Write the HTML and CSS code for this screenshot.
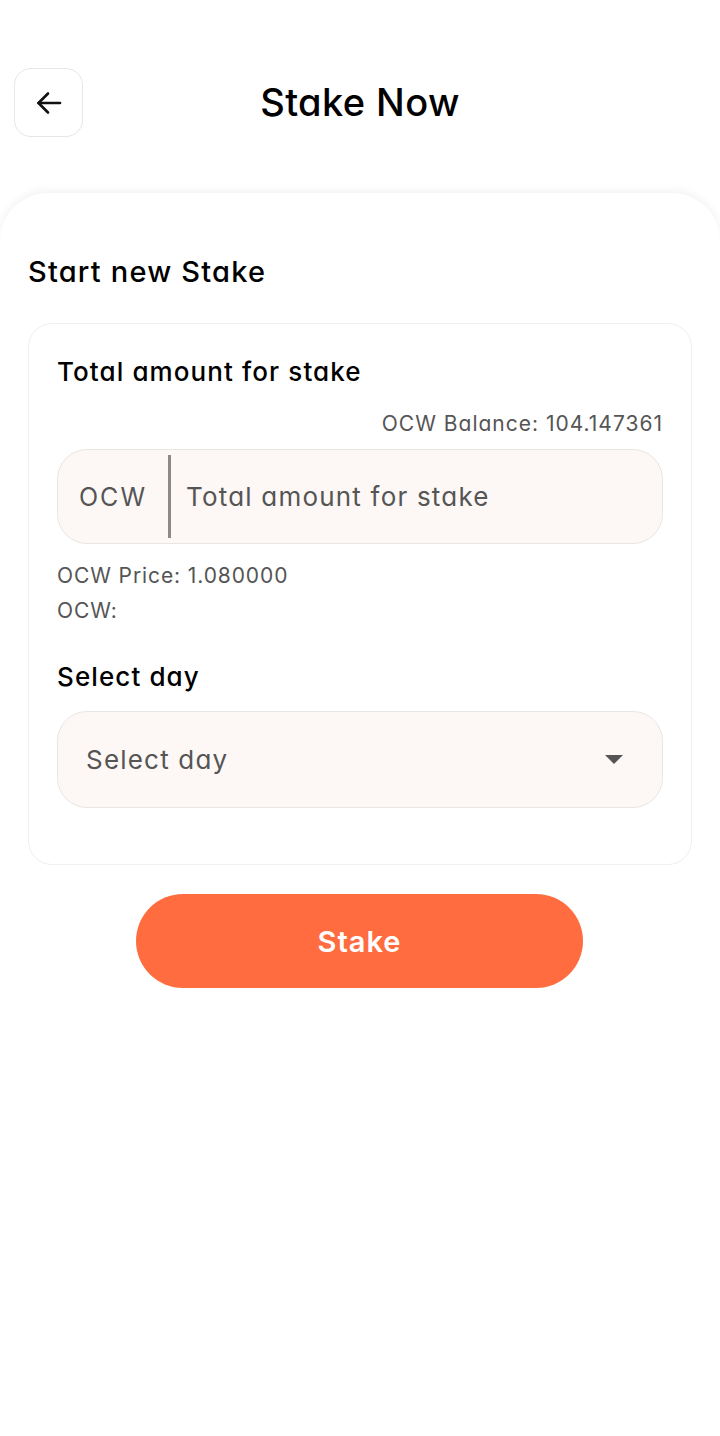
FILE: index.html
```html
<!DOCTYPE html>
<html>
<head>
<meta charset="utf-8">
<link rel="stylesheet" href="styles.css">
</head>
<body>
<div class="header">
  <button class="back" aria-label="Back">
    <svg width="32" height="32" viewBox="0 0 32 32" fill="none" stroke="#111" stroke-width="2.6" stroke-linecap="round" stroke-linejoin="round">
      <path d="M27 16H5.5"/>
      <path d="M15 6.5L5.5 16L15 25.5"/>
    </svg>
  </button>
  <h1 class="title">Stake Now</h1>
  <span></span>
</div>

<div class="sheet">
  <h2 class="section-title">Start new Stake</h2>
  <div class="card">
    <div class="label">Total amount for stake</div>
    <div class="balance">OCW Balance: 104.147361</div>
    <div class="input">
      <span class="prefix">OCW</span>
      <span class="divider"></span>
      <span class="placeholder">Total amount for stake</span>
    </div>
    <div class="info">OCW Price: 1.080000</div>
    <div class="info">OCW:</div>
    <div class="label label-day">Select day</div>
    <div class="select">
      <span class="placeholder">Select day</span>
      <span class="caret"></span>
    </div>
  </div>
  <div class="actions">
    <button class="stake">Stake</button>
  </div>
</div>
</body>
</html>
```

FILE: styles.css
```css
* { box-sizing: border-box; }
html, body {
  margin: 0;
  padding: 0;
  background: #ffffff;
  font-family: "Inter", "Lato", "Noto Sans", sans-serif;
  font-feature-settings: "cv11" 1;
  color: #000;
}
body { min-height: 1436px; }

.header {
  display: grid;
  grid-template-columns: 1fr auto 1fr;
  align-items: center;
  padding: 68px 14px 0;
}
.back {
  width: 69px;
  height: 69px;
  border: 1.5px solid #e6e6e6;
  border-radius: 17px;
  background: #fff;
  display: flex;
  align-items: center;
  justify-content: center;
  padding: 0;
}
.title {
  margin: 0;
  font-size: 38px;
  font-weight: 550;
  letter-spacing: 0.4px;
  line-height: 69px;
}

.sheet {
  margin-top: 56px;
  border-radius: 48px 48px 0 0;
  box-shadow: 0 -3px 8px rgba(0, 0, 0, 0.05);
  padding: 61px 28px 0;
  min-height: 1243px;
}
.section-title {
  margin: 0;
  font-size: 29px;
  font-weight: 550;
  line-height: 36px;
  letter-spacing: 1.2px;
}

.card {
  margin-top: 33px;
  border: 1.5px solid #efefef;
  border-radius: 24px;
  padding: 31px 28px 56px;
  display: flex;
  flex-direction: column;
}
.label {
  font-size: 26px;
  font-weight: 550;
  line-height: 34px;
  letter-spacing: 1.1px;
}
.balance {
  margin-top: 20px;
  text-align: right;
  font-size: 21px;
  color: #555;
  line-height: 30px;
  letter-spacing: 1px;
}
.input {
  margin-top: 10px;
  height: 95px;
  background: #fdf8f5;
  border: 1.5px solid #e9e5e2;
  border-radius: 30px;
  display: flex;
  align-items: center;
  padding-left: 21px;
}
.prefix {
  font-size: 25px;
  color: #555;
  letter-spacing: 2px;
}
.divider {
  width: 3px;
  align-self: stretch;
  margin: 5px 15px 5px 21px;
  background: #8d8a88;
}
.placeholder {
  font-size: 26px;
  color: #555;
  letter-spacing: 1.2px;
}
.info {
  font-size: 21px;
  color: #555;
  line-height: 35px;
  letter-spacing: 0.9px;
}
.input + .info { margin-top: 14px; }
.label-day { margin-top: 32px; }
.select {
  margin-top: 17px;
  height: 97px;
  background: #fdf8f5;
  border: 1.5px solid #e9e5e2;
  border-radius: 30px;
  display: flex;
  align-items: center;
  justify-content: space-between;
  padding: 0 39px 0 28px;
}
.caret {
  width: 0;
  height: 0;
  border-left: 9px solid transparent;
  border-right: 9px solid transparent;
  border-top: 9px solid #555;
}

.actions {
  display: flex;
  justify-content: center;
  margin-top: 29px;
  padding-right: 1px;
}
.stake {
  width: 447px;
  height: 94px;
  border: none;
  border-radius: 47px;
  background: #ff6c3f;
  color: #fff;
  font-family: inherit;
  font-size: 29px;
  font-weight: 600;
  letter-spacing: 1px;
}
```
